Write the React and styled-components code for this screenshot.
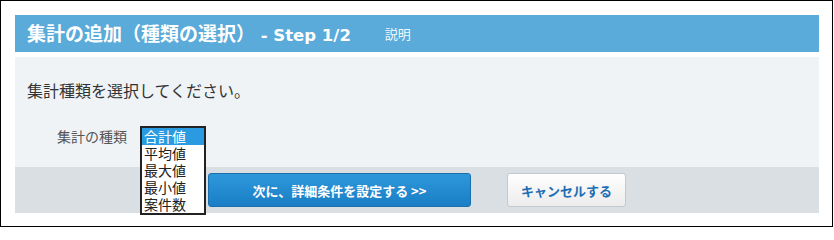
import styled, { createGlobalStyle } from "styled-components";

const GlobalStyle = createGlobalStyle`
  body {
    margin: 0;
    background: #ffffff;
    font-family: "Noto Sans CJK JP", "Noto Sans", sans-serif;
  }
`;

const Frame = styled.div`
  box-sizing: border-box;
  width: 833px;
  height: 227px;
  border: 1px solid #000;
  padding: 14px 13px 13px 14px;
  display: flex;
  flex-direction: column;
  gap: 5px;
`;

const Header = styled.div`
  height: 37px;
  background: #5aaada;
  display: flex;
  align-items: center;
  padding-left: 12px;
  color: #fff;
`;

const Title = styled.h1`
  margin: 0;
  font-size: 19px;
  font-weight: 700;
  line-height: 1;
  white-space: nowrap;
`;

const StepLabel = styled.span`
  font-family: "DejaVu Sans", "Noto Sans CJK JP", sans-serif;
  font-size: 16.5px;
  font-weight: 700;
`;

const HelpLink = styled.span`
  margin-left: 34px;
  font-size: 13px;
  color: #f4f9fd;
`;

const Panel = styled.div`
  display: flex;
  flex-direction: column;
`;

const Body = styled.div`
  height: 110px;
  box-sizing: border-box;
  background: #eff3f6;
  padding: 21px 12px 0;
  display: flex;
  flex-direction: column;
  gap: 24px;
`;

const Lead = styled.p`
  margin: 0;
  font-size: 16px;
  line-height: 24px;
  color: #333;
`;

const FieldRow = styled.div`
  display: flex;
  align-items: flex-start;
  padding-left: 30px;
  gap: 13px;
`;

const Label = styled.span`
  font-size: 14px;
  line-height: 20px;
  color: #555;
`;

const SelectAnchor = styled.div`
  position: relative;
  width: 66px;
  height: 20px;
`;

const ListPopup = styled.ul`
  position: absolute;
  top: 0;
  left: 0;
  z-index: 2;
  margin: 0;
  padding: 0;
  list-style: none;
  width: 66px;
  box-sizing: border-box;
  border: 2px solid #222;
  background: #fff;
`;

const Option = styled.li`
  height: 17px;
  line-height: 17px;
  padding-left: 2px;
  font-size: 14px;
  color: ${(p) => (p.$selected ? "#fff" : "#222")};
  background: ${(p) => (p.$selected ? "#2a9be0" : "transparent")};
`;

const Footer = styled.div`
  height: 46px;
  background: #dadfe3;
  display: flex;
  align-items: center;
  padding-left: 193px;
  gap: 36px;
`;

const Button = styled.button`
  height: 34px;
  box-sizing: border-box;
  border-radius: 3px;
  font-family: inherit;
  font-size: 13px;
  font-weight: 700;
  cursor: pointer;
  width: ${(p) => p.$width}px;
  ${(p) =>
    p.$primary
      ? `
    color: #fff;
    border: 1px solid #1b6fae;
    background: linear-gradient(#2e97da, #1a7fc6);
  `
      : `
    color: #1c6db3;
    border: 1px solid #c3cacf;
    background: linear-gradient(#ffffff, #ececec);
  `}
`;

const options = ["合計値", "平均値", "最大値", "最小値", "案件数"];

const App = () => {
  return (
    <>
      <GlobalStyle />
      <Frame>
        <Header>
          <Title>
            集計の追加（種類の選択）<StepLabel> - Step 1/2</StepLabel>
          </Title>
          <HelpLink>説明</HelpLink>
        </Header>
        <Panel>
          <Body>
            <Lead>集計種類を選択してください。</Lead>
            <FieldRow>
              <Label>集計の種類</Label>
              <SelectAnchor>
                <ListPopup>
                  {options.map((o, i) => (
                    <Option key={o} $selected={i === 0}>
                      {o}
                    </Option>
                  ))}
                </ListPopup>
              </SelectAnchor>
            </FieldRow>
          </Body>
          <Footer>
            <Button $primary $width={263}>
              次に、詳細条件を設定する &gt;&gt;
            </Button>
            <Button $width={119}>キャンセルする</Button>
          </Footer>
        </Panel>
      </Frame>
    </>
  );
};

export default App;
